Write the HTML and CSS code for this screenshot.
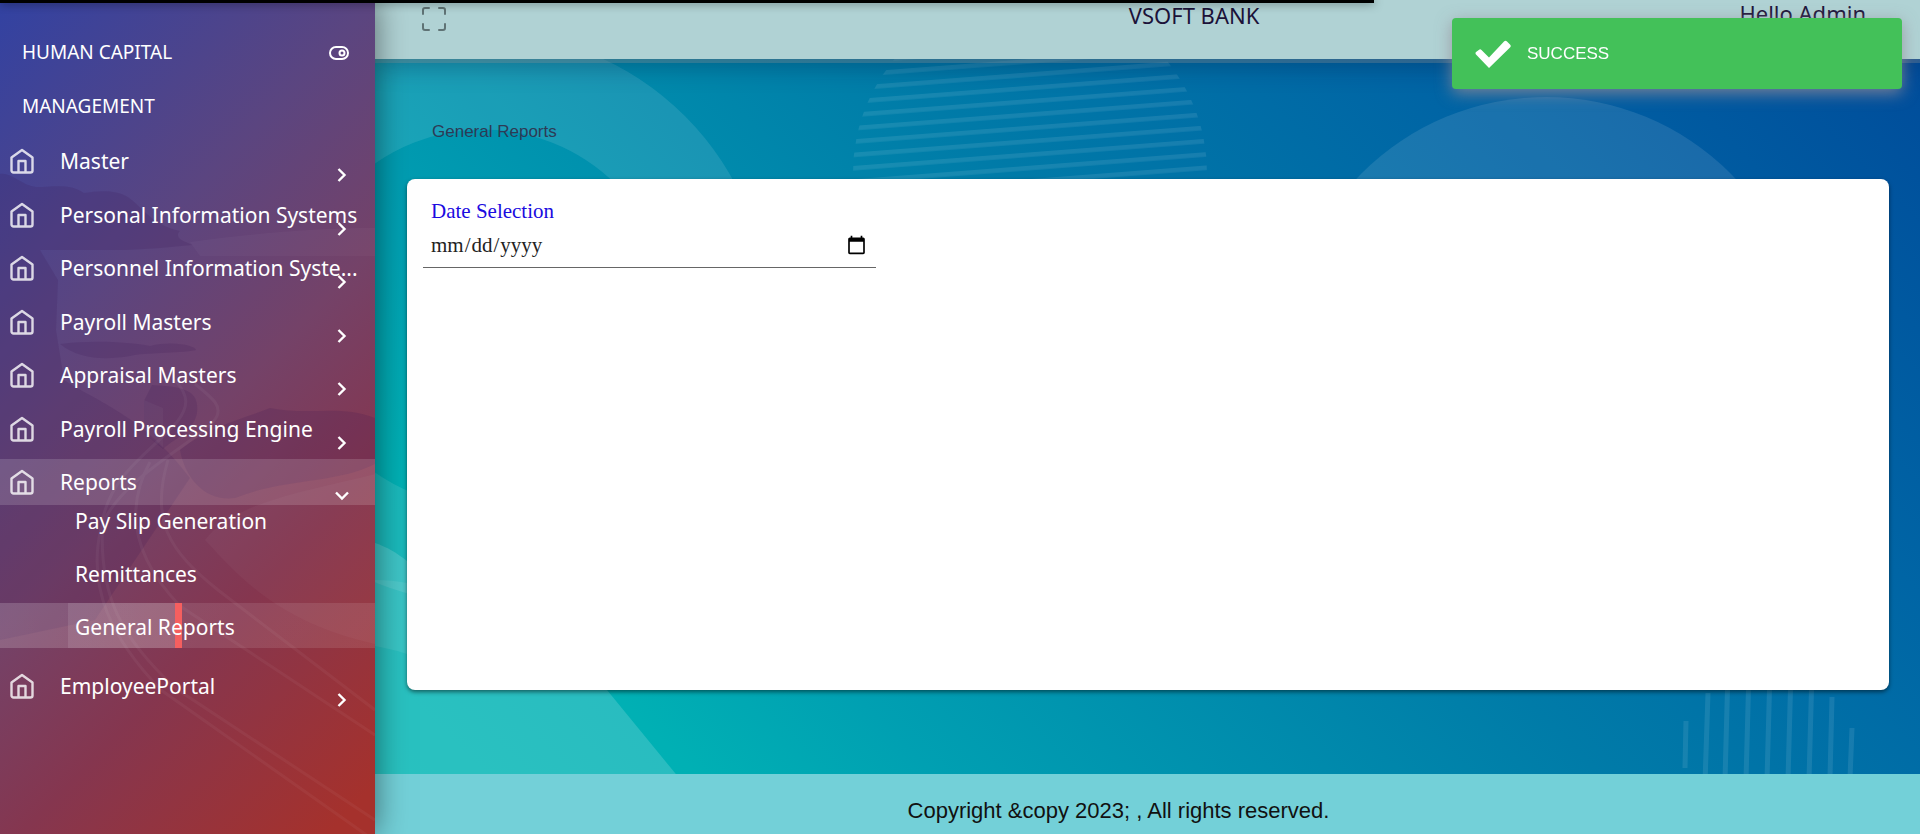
FILE: index.html
```
<!DOCTYPE html>
<html lang="en">
<head>
<meta charset="utf-8">
<title>General Reports</title>
<link rel="stylesheet" href="styles.css">
</head>
<body>
<svg class="defs" aria-hidden="true">
  <symbol id="home" viewBox="0 0 24 26" fill="none" stroke="currentColor" stroke-width="2.400" stroke-linejoin="round"><path d="M1.500 9.500 12 2l10.500 7.500v13a2 2 0 0 1-2 2h-17a2 2 0 0 1-2-2Z"/><path d="M8.500 24V13h7v11"/></symbol>
  <symbol id="chevron" viewBox="0 0 10 14" fill="none" stroke="currentColor" stroke-width="2.400"><path d="M1.500 1 7.500 7 1.500 13"/></symbol>
</svg>
<div class="loader"></div>
<div class="app">
  <aside class="sidebar">
    <svg class="scene" viewBox="0 0 375 834" preserveAspectRatio="none" aria-hidden="true">
      <path class="dark" d="M0 174C12 172 22 186 36 187c18 0 34-4 48 6 14-2 30-4 44 4 14 10 24 28 52 34-8 8 10 12 12 14-22 2-40 4-66 5H40l18 30-2 50 8 50c30 20 80 36 126 98L95 620 0 640Z"/>
      <path class="dark" d="M60 344c30-4 70-2 90 2 24-6 46 0 46 4-20 4-50 2-66 6-24 4-50 4-70-12ZM180 450c30-24 60-30 90-42 40 8 70-4 105 10v46c-40 20-90 14-140 34-30 4-50-20-55-48Z"/>
      <path class="dark" d="M152 385c30 2 48 4 45 28-4 20-24 26-34 36l-19-16v-32Z"/>
      <g class="road">
        <path d="M195 384c20 16 26 22 22 32-8 20-98 60-116 112-14 60 10 110 60 162l214 151"/>
        <path d="M175 380c14 16 14 26 2 42-24 28-64 50-74 96-6 80 20 120 72 170l200 132"/>
        <path d="M150 462c-24 44-20 92 30 144L375 735M168 460c-18 60 0 90 50 130l157 120"/>
      </g>
      <path class="light" d="M190 242c60-8 120-14 185-14v28H200ZM144 400l19 8v40l-19-15ZM205 540c30-40 110-50 170-66v170c-90-20-130-60-170-104Z"/>
    </svg>
    <header class="brand">
      <span>HUMAN CAPITAL MANAGEMENT</span>
      <button type="button" class="bare pin" aria-label="Toggle menu"><svg width="20" height="14" viewBox="0 0 20 14" fill="none" stroke="currentColor" stroke-width="2"><rect x="1" y="1" width="18" height="12" rx="6"/><circle cx="13" cy="7" r="2.500"/></svg></button>
    </header>
    <nav>
      <ul class="menu">
        <li><a href="#"><svg class="home"><use href="#home"/></svg><span>Master</span><svg class="chev"><use href="#chevron"/></svg></a></li>
        <li><a href="#"><svg class="home"><use href="#home"/></svg><span>Personal Information Systems</span><svg class="chev"><use href="#chevron"/></svg></a></li>
        <li><a href="#"><svg class="home"><use href="#home"/></svg><span>Personnel Information Syste...</span><svg class="chev"><use href="#chevron"/></svg></a></li>
        <li><a href="#"><svg class="home"><use href="#home"/></svg><span>Payroll Masters</span><svg class="chev"><use href="#chevron"/></svg></a></li>
        <li><a href="#"><svg class="home"><use href="#home"/></svg><span>Appraisal Masters</span><svg class="chev"><use href="#chevron"/></svg></a></li>
        <li><a href="#"><svg class="home"><use href="#home"/></svg><span>Payroll Processing Engine</span><svg class="chev"><use href="#chevron"/></svg></a></li>
        <li class="open"><a href="#"><svg class="home"><use href="#home"/></svg><span>Reports</span><svg class="chev"><use href="#chevron"/></svg></a>
          <ul class="submenu">
            <li><a href="#">Pay Slip Generation</a></li>
            <li><a href="#">Remittances</a></li>
            <li><a href="#" class="current">General Reports</a></li>
          </ul>
        </li>
        <li><a href="#"><svg class="home"><use href="#home"/></svg><span>EmployeePortal</span><svg class="chev"><use href="#chevron"/></svg></a></li>
      </ul>
    </nav>
  </aside>
  <div class="main">
    <svg class="backdrop" viewBox="375 0 1545 834" preserveAspectRatio="none" aria-hidden="true">
      <defs>
        <pattern id="lines" width="20" height="13.300" patternUnits="userSpaceOnUse" patternTransform="translate(1030 59) rotate(-4.400)"><rect width="20" height="4.500" fill="#fff"/></pattern>
      </defs>
      <circle cx="483" cy="318" r="237" fill="none" stroke="#fff" stroke-width="97" opacity=".1"/>
      <circle cx="1030" cy="173" r="177" fill="url(#lines)" opacity=".09"/>
      <circle cx="1546" cy="358" r="261" fill="#fff" opacity=".1"/>
      <path d="M375 543c12 4 22 10 32 18v22c-12-2-22-3-32-3ZM375 580c70 0 180 40 232 110l68 83 52 61H375Z" fill="#fff" opacity=".16"/>
      <path d="M375 580c12 0 22 1 32 3v71c-12-4-22-6-32-8Z" fill="#fff" opacity=".08"/>
      <g stroke="#fff" stroke-width="5" opacity=".09"><path d="M1686 721l-1 47M1708 693l-3 90M1728 670l-3 110M1749 670l-3 110M1770 670l-3 110M1791 670l-3 110M1812 670l-3 110M1832 697l-2 80M1852 728l-2 50"/></g>
    </svg>
    <header class="topbar">
      <button type="button" class="bare full" aria-label="Full screen"><svg width="26" height="26" viewBox="0 0 26 26" fill="none" stroke="currentColor" stroke-width="2" stroke-linecap="round"><path d="M2 8V4a2 2 0 0 1 2-2h4M18 2h4a2 2 0 0 1 2 2v4M24 18v4a2 2 0 0 1-2 2h-4M8 24H4a2 2 0 0 1-2-2v-4"/></svg></button>
      <span class="bank">VSOFT BANK</span>
      <span class="user">Hello Admin</span>
    </header>
    <main class="content">
      <h1>General Reports</h1>
      <section class="card">
        <label for="date">Date Selection</label>
        <input type="date" id="date">
      </section>
    </main>
    <footer>Copyright &amp;copy 2023; , All rights reserved.</footer>
  </div>
</div>
<div class="toast" role="status">
  <svg width="36" height="28" viewBox="0 0 36 28" aria-hidden="true"><path d="M1 14.500Q0 13 1 12l3.500-2.500q1-.500 2 .500l7.500 7.500L29 1.500q1.500-1.500 3 0l3 3q1.500 1.500 0 3L14 28Z" fill="#fff"/></svg>
  <span>SUCCESS</span>
</div>
</body>
</html>
```
FILE: styles.css
```
* { box-sizing: border-box; }
body { margin: 0; font-family: "Noto Sans", sans-serif; font-size: 21px; }
ul { list-style: none; margin: 0; padding: 0; }
a { color: inherit; text-decoration: none; }
.defs { display: none; }
.bare { border: 0; background: none; padding: 0; color: inherit; display: flex; }

.loader { position: fixed; z-index: 5; top: 0; left: 0; width: 1374px; height: 3px; background: #000; box-shadow: 0 0 10px rgba(0, 0, 0, .7); }
.app { display: flex; min-height: 100vh; }

.sidebar {
  position: relative; z-index: 2; flex: none; width: 375px; padding-top: 25px; color: #fff;
  background: linear-gradient(134deg, #3242a2 0%, #5b4580 32%, #744268 52%, #85364f 70%, #a5312c 96%);
  box-shadow: 0 0 30px rgba(0, 0, 0, .5);
}
.scene { position: absolute; z-index: -1; inset: 0; width: 100%; height: 100%; }
.dark { fill: #35104f; opacity: .16; }
.light { fill: #fff; opacity: .03; }
.road { fill: none; stroke: #fff; stroke-width: 3; opacity: .04; }

.brand { display: flex; justify-content: space-between; padding: 0 26px 5px 22px; font-size: 19px; line-height: 54px; }
.brand span { width: 170px; }
.pin { align-self: flex-start; padding-top: 21px; }

.menu > li { margin-bottom: 7px; }
.menu > li:nth-child(odd) { margin-bottom: 8px; }
.menu > li.open { margin-bottom: 15px; }
.menu > li > a { position: relative; display: flex; align-items: center; height: 46px; padding-left: 10px; }
.menu span { margin-left: 26px; white-space: nowrap; }
.home { width: 24px; height: 26px; opacity: .8; }
.chev { position: absolute; right: 28px; top: 30px; width: 10px; height: 14px; }
.open > a { background: rgba(255, 255, 255, .15); }
.open .chev { transform: rotate(90deg); }
.submenu { display: grid; gap: 8px; margin-top: -8px; position: relative; }
.submenu a { display: block; height: 45px; padding-left: 75px; line-height: 48px; }
.submenu .current {
  background:
    linear-gradient(#f55f5f, #f55f5f) 175px 0 / 7px 100% no-repeat,
    linear-gradient(rgba(255, 255, 255, .1), rgba(255, 255, 255, .1)) 68px 0 / 107px 100% no-repeat,
    linear-gradient(90deg, rgba(255, 255, 255, .18) 0, rgba(255, 255, 255, .15) 175px, rgba(255, 255, 255, .1) 182px);
}

.main {
  position: relative; z-index: 1; flex: 1; min-width: 0; display: flex; flex-direction: column;
  background: linear-gradient(45deg, #00b9b4 0%, #00b0b4 16%, #00a0b2 26%, #007ba8 54%, #0065a5 75%, #004d9b 97%);
}
.backdrop { position: absolute; z-index: -1; inset: 0; width: 100%; height: 100%; }
.topbar {
  display: grid; grid-template-columns: 7fr auto 6fr; height: 59px; padding: 0 54px 0 46px;
  background: #b0d2d4; color: #1c1239; font-size: 22px; line-height: 30px;
  box-shadow: 0 4px 0 rgba(150, 150, 150, .3), 0 8px 24px rgba(0, 20, 60, .3);
}
.full { margin-top: 6px; color: #5f7375; height: 26px; justify-self: start; }
.user { line-height: 26px; justify-self: end; }
.content { flex: 1; display: flex; flex-direction: column; padding: 60px 31px 84px 32px; }
h1 { margin: 0 0 35px 25px; font: 17px/25px "Liberation Sans", sans-serif; color: #2d3a55; }
.card {
  flex: 1; padding: 20px 16px; border-radius: 8px; background: #fff; font-family: "Liberation Serif", serif;
  box-shadow: 0 2px 4px rgba(0, 0, 0, .5);
}
label { display: block; padding-left: 8px; font-size: 21px; line-height: 24px; color: #1b0be0; }
input {
  display: block; width: 453px; max-width: 100%; height: 45px; padding: 0 7px; border: 0; border-bottom: 1px solid #666;
  background: none; color: #222; font: 21px "Liberation Serif", serif;
}
footer { padding: 25px 58px 11px 0; background: #73d0d8; color: #111; text-align: center; font: 22px/24px "Liberation Sans", sans-serif; }

.toast {
  position: fixed; z-index: 4; top: 18px; right: 18px; display: flex; align-items: center; gap: 16px; width: 450px; height: 71px; padding-left: 23px;
  border-radius: 4px; background: #43c159; color: #fff; font: 17px "Liberation Sans", sans-serif; box-shadow: 0 4px 16px rgba(150, 140, 150, .8);
}
```
